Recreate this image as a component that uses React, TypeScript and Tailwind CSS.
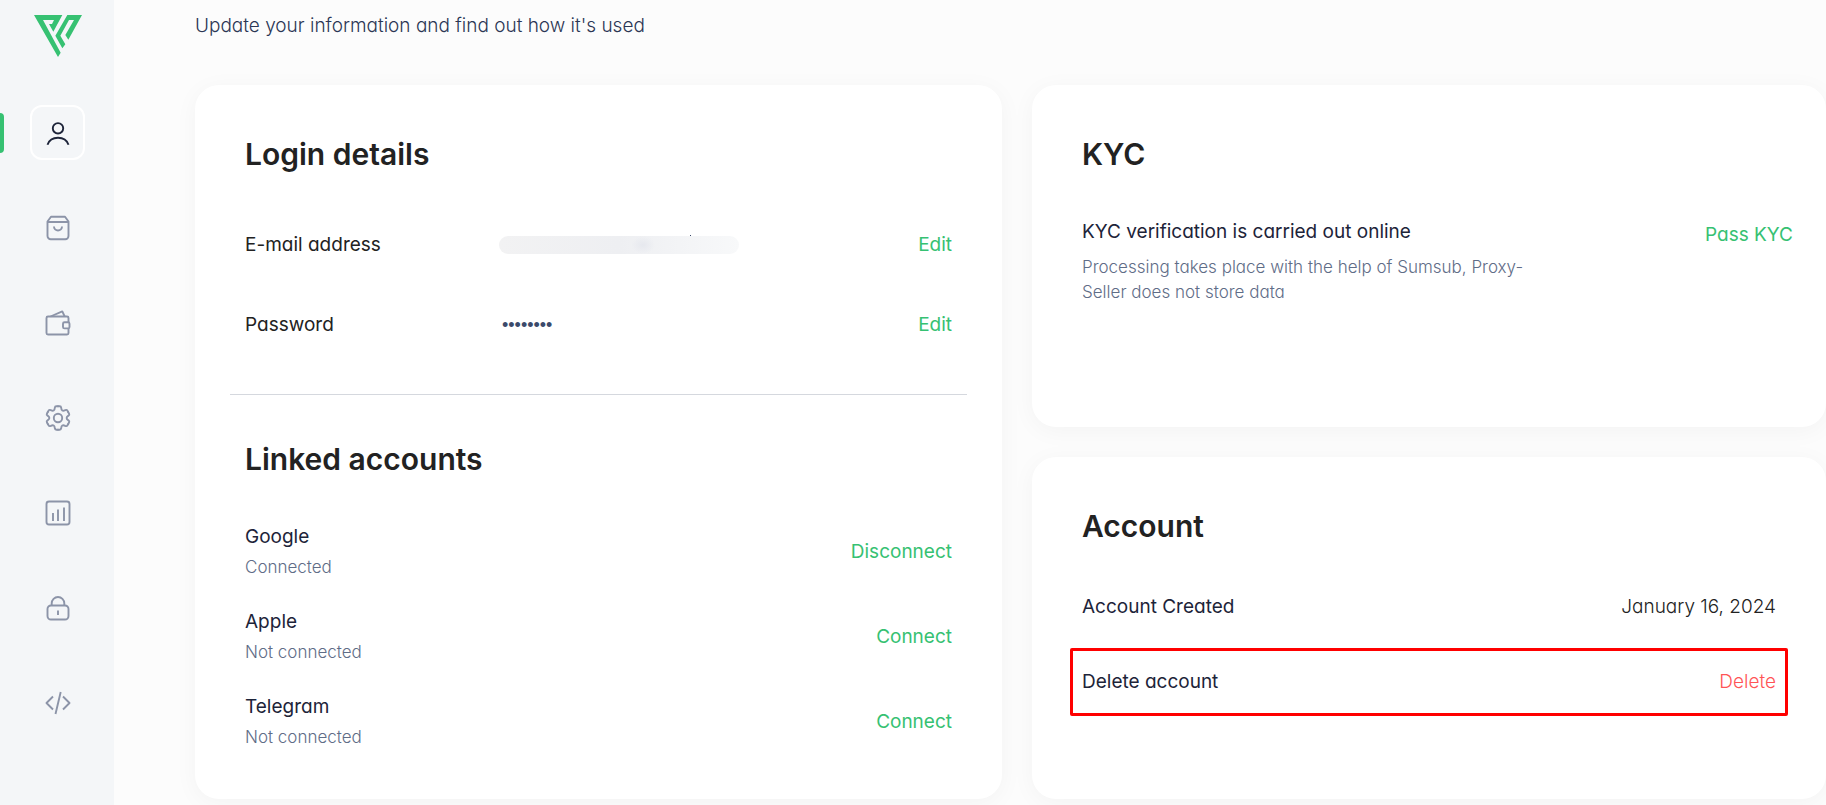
import type { ReactNode } from "react";

type TNavItem = {
    label: string;
    icon: ReactNode;
    active?: boolean;
};

type TLinkedAccount = {
    name: string;
    connected: boolean;
};

const navItems: TNavItem[] = [
    {
        label: "Profile",
        active: true,
        icon: (
            <>
                <circle cx="14" cy="9.3" r="5.2" />
                <path d="M3.5 25.8C5 21.5 9 18.8 14 18.8s9 2.7 10.5 7" />
            </>
        ),
    },
    {
        label: "Orders",
        icon: (
            <>
                <path d="M3.5 7.5 7 2.7h14l3.5 4.8V22a3.2 3.2 0 0 1-3.2 3.2H6.7A3.2 3.2 0 0 1 3.5 22V7.5Z" />
                <path d="M3.5 8h21M10 12.5a4 4 0 0 0 8 0" />
            </>
        ),
    },
    {
        label: "Wallet",
        icon: (
            <>
                <path d="M24.5 13V9A1.5 1.5 0 0 0 23 7.5H4A1.5 1.5 0 0 0 2.5 9v15A1.5 1.5 0 0 0 4 25.5h19a1.5 1.5 0 0 0 1.5-1.5v-4.5" />
                <rect x="19" y="13.2" width="6.5" height="6.2" rx="1.5" />
                <path d="M6.5 7.5 18.3 2.4l2.4 5.1" />
            </>
        ),
    },
    {
        label: "Settings",
        icon: (
            <g transform="translate(14 14)">
                {[0, 60, 120, 180, 240, 300].map((angle) => (
                    <path
                        key={angle}
                        transform={`rotate(${angle})`}
                        strokeLinecap="round"
                        d="M0-11.8H1.8Q3-11.8 3.2-10.2 3.4-5.9 7.23-7.87 8.72-8.5 9.32-7.46L10.22-5.9"
                    />
                ))}
                <circle r="4.2" />
            </g>
        ),
    },
    {
        label: "Statistics",
        icon: (
            <>
                <rect x="2.5" y="2.5" width="23" height="23" rx="2.5" />
                <path d="M9 14v8M14 10.5V22M20 8.5V22" />
            </>
        ),
    },
    {
        label: "Security",
        icon: (
            <>
                <rect x="3.5" y="11.5" width="21" height="14" rx="3.5" />
                <path d="M7.7 11.5V9.3a6.3 6.3 0 0 1 12.6 0v2.2M14 16.5V21" />
            </>
        ),
    },
    {
        label: "API",
        icon: <path d="M9 7.5 2.5 14 9 20.5M19 7.5l6.5 6.5-6.5 6.5M16.7 3l-5.2 22" />,
    },
];

const linkedAccounts: TLinkedAccount[] = [
    { name: "Google", connected: true },
    { name: "Apple", connected: false },
    { name: "Telegram", connected: false },
];

const Logo = () => (
    <svg viewBox="0 0 144 126" className="h-[42px] w-12" fill="#36c172">
        <path d="M0 0h85L58 50 45 27h9l6-12H27l53 98-8 13Z" />
        <path d="M100 0h44l-41 74-9-14 26-45h-15L79 62l15 26-9 12-21-38Z" />
    </svg>
);

const Sidebar = () => (
    <aside className="w-[114px] shrink-0 bg-[#f4f6f8] flex flex-col items-center">
        <a href="#" aria-label="Home" className="mt-[15px] mb-12 pl-0.5">
            <Logo />
        </a>
        <nav className="w-full flex flex-col gap-10">
            {navItems.map((item) => (
                <div key={item.label} className="relative flex justify-center pl-px">
                    {item.active && (
                        <span className="absolute left-0 top-2 h-10 w-1 rounded-r bg-[#36c172]" />
                    )}
                    <a
                        href="#"
                        aria-label={item.label}
                        className={`size-[55px] rounded-xl border-2 flex items-center justify-center ${
                            item.active ? "border-white text-[#1d2439]" : "border-transparent text-[#8c94a8]"
                        }`}
                    >
                        <svg
                            viewBox="0 0 28 28"
                            className="size-7"
                            fill="none"
                            stroke="currentColor"
                            strokeWidth="1.9"
                            strokeLinejoin="round"
                        >
                            {item.icon}
                        </svg>
                    </a>
                </div>
            ))}
        </nav>
    </aside>
);

const Card = ({ children }: { children: ReactNode }) => (
    <section className="bg-white rounded-3xl shadow-[0_4px_24px_rgba(0,0,0,0.04)] px-[50px] pt-[47px]">
        {children}
    </section>
);

const Title = ({ children }: { children: ReactNode }) => (
    <h2 className="text-[30px] leading-[44px] font-semibold text-[#222222] [font-feature-settings:normal]">
        {children}
    </h2>
);

const Action = ({ children }: { children: ReactNode }) => (
    <button type="button" className="text-[19px] leading-6 text-[#36c172] cursor-pointer">
        {children}
    </button>
);

const App = () => {
    return (
        <div className="min-h-screen flex bg-[#fcfcfc] text-[19px] leading-6 text-[#1d2439] font-['Inter',sans-serif] [font-feature-settings:'cv11']">
            <Sidebar />
            <main className="flex-1 pl-[81px] pt-3.5 overflow-hidden">
                <p className="font-light text-[#2b3654]">Update your information and find out how it's used</p>

                <div className="mt-[47px] pb-1.5 grid grid-cols-[807fr_794fr] gap-[30px]">
                    <Card>
                        <Title>Login details</Title>
                        <div className="mt-[41px] h-14 flex items-center">
                            <span className="w-[254px] text-[#222222]">E-mail address</span>
                            {/* hidden e-mail value */}
                            <span className="relative h-[18px] w-60">
                                <span className="block h-full rounded-full bg-linear-to-r from-[#f2f2f3] via-[#eeeff2] to-[#f8f9fa]" />
                                <span className="absolute left-[132px] top-0 h-full w-6 bg-radial from-[#e6e8ee] to-transparent to-70%" />
                                <span className="absolute right-12 -top-px size-px bg-[#3b4a6b]" />
                            </span>
                            <span className="ml-auto flex"><Action>Edit</Action></span>
                        </div>
                        <div className="mt-6 h-14 flex items-center">
                            <label htmlFor="password" className="w-[257px] text-[#222222]">Password</label>
                            <input
                                id="password"
                                type="password"
                                readOnly
                                defaultValue="password"
                                className="w-40 text-lg leading-6 font-['Liberation_Sans',sans-serif] text-[#3b4a6b] bg-transparent outline-none"
                            />
                            <span className="ml-auto flex"><Action>Edit</Action></span>
                        </div>
                        <hr className="mt-[41px] -mx-[15px] border-[#d5d8de]" />

                        <div className="mt-[42px]">
                            <Title>Linked accounts</Title>
                        </div>
                        <ul className="mt-11 pb-[50px] flex flex-col gap-[31px]">
                            {linkedAccounts.map((account) => (
                                <li key={account.name} className="flex items-center justify-between">
                                    <div>
                                        <p>{account.name}</p>
                                        <p className="mt-1.5 text-[17px] leading-6 font-light text-[#5f6d87]">
                                            {account.connected ? "Connected" : "Not connected"}
                                        </p>
                                    </div>
                                    <Action>{account.connected ? "Disconnect" : "Connect"}</Action>
                                </li>
                            ))}
                        </ul>
                    </Card>

                    <div className="grid grid-rows-2 gap-[30px]">
                        <Card>
                            <Title>KYC</Title>
                            <div className="mt-11 -mr-[17px] flex items-start justify-between">
                                <div className="w-[450px]">
                                    <p>KYC verification is carried out online</p>
                                    <p className="mt-[11px] text-[17px] leading-[25px] font-light text-[#5f6d87]">
                                        Processing takes place with the help of Sumsub, Proxy-Seller does not store data
                                    </p>
                                </div>
                                <span className="flex pt-[3px]"><Action>Pass KYC</Action></span>
                            </div>
                        </Card>
                        <Card>
                            <Title>Account</Title>
                            <div className="mt-[47px] flex justify-between">
                                <span>Account Created</span>
                                <span className="font-light text-[#222222]">January 16, 2024</span>
                            </div>
                            <div className="mt-[29px] -mx-3 h-[68px] px-[9px] flex items-center justify-between border-3 border-[#ff0000] rounded-xs">
                                <span>Delete account</span>
                                <button type="button" className="font-light text-[#ff5456] cursor-pointer">Delete</button>
                            </div>
                        </Card>
                    </div>
                </div>
            </main>
        </div>
    );
};

export default App;
